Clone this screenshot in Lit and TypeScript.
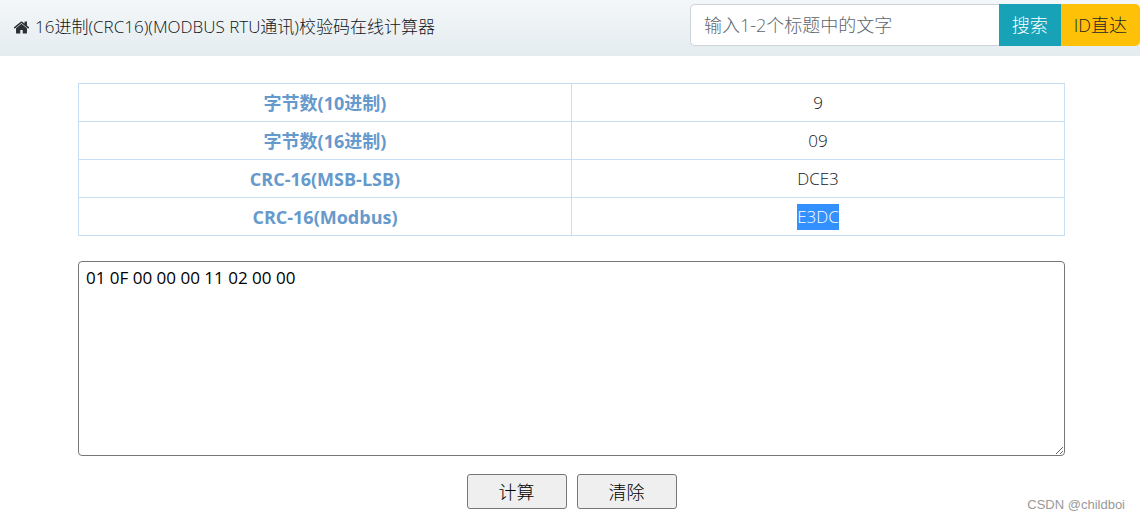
import { LitElement, html, css } from "lit";
import { customElement, state } from "lit/decorators.js";

const crc16 = (bytes: number[]): number => {
  let crc = 0xffff;
  for (const b of bytes) {
    crc ^= b;
    for (let i = 0; i < 8; i++) crc = crc & 1 ? (crc >> 1) ^ 0xa001 : crc >> 1;
  }
  return crc;
};

interface Result {
  label: string;
  value: string;
  selected?: boolean;
}

const initialResults: Result[] = [
  { label: "字节数(10进制)", value: "9" },
  { label: "字节数(16进制)", value: "09" },
  { label: "CRC-16(MSB-LSB)", value: "DCE3" },
  { label: "CRC-16(Modbus)", value: "E3DC", selected: true },
];

@customElement("app-root")
export class AppRoot extends LitElement {
  @state() private text = "01 0F 00 00 00 11 02 00 00";
  @state() private results = initialResults;

  static styles = css`
    :host {
      display: block;
      position: relative;
      min-height: 100vh;
      box-sizing: border-box;
      background: #fff;
      color: #111418;
      font: 300 17px/26px "Open Sans", "Noto Sans CJK SC", sans-serif;
    }
    * {
      box-sizing: border-box;
    }
    header {
      display: flex;
      justify-content: space-between;
      align-items: flex-start;
      height: 56px;
      padding-top: 4px;
      background: linear-gradient(#f4f7f9, #e4ecef);
    }
    .title {
      display: flex;
      align-items: center;
      gap: 5px;
      height: 46px;
      margin: 0;
      padding-left: 13px;
      font-size: 17px;
      font-weight: 300;
      white-space: nowrap;
    }
    .home {
      display: flex;
      color: #2b3035;
    }
    .search {
      display: flex;
      width: 450px;
      height: 42px;
      font-size: 18px;
    }
    input,
    button,
    textarea {
      font: inherit;
    }
    .query {
      flex: 1;
      min-width: 0;
      padding: 0 13px;
      border: 1px solid #ced4da;
      border-right: 0;
      border-radius: 5px 0 0 5px;
      background: #fff;
    }
    .query::placeholder {
      color: #5c656d;
      opacity: 1;
    }
    .search button {
      border: 0;
      padding: 0 13px;
      white-space: nowrap;
    }
    .find {
      background: #17a2b8;
      color: #fff;
    }
    .search .direct {
      border-radius: 0 5px 5px 0;
      background: #ffc107;
      color: #212529;
    }
    main {
      padding: 27px 75px 0 78px;
    }
    table {
      width: 100%;
      table-layout: fixed;
      border-collapse: collapse;
      text-align: center;
    }
    th,
    td {
      height: 38px;
      padding: 0;
      border: 1px solid #c6dff5;
    }
    th {
      color: #6699cc;
      font-size: 18px;
      font-weight: 700;
    }
    .selected {
      display: inline-block;
      background: #3390ff;
      color: #fff;
    }
    .bytes {
      display: block;
      width: 100%;
      height: 195px;
      margin-top: 25px;
      padding: 3px 7px;
      border: 1px solid #767676;
      border-radius: 4px;
      background: #fff;
      color: #000;
      font-weight: 400;
      resize: both;
    }
    .actions {
      display: flex;
      justify-content: center;
      gap: 10px;
      margin-top: 18px;
      font-size: 18px;
    }
    .actions button {
      width: 100px;
      height: 35px;
      padding: 0;
      border: 1px solid #767676;
      border-radius: 3px;
      background: #efefef;
      color: #000;
    }
    .mark {
      position: absolute;
      right: 15px;
      bottom: 5px;
      color: #999;
      font: 13px/20px "Liberation Sans", sans-serif;
    }
  `;

  private calculate() {
    const bytes = (this.text.match(/[0-9a-f]{1,2}/gi) ?? []).map((h) => parseInt(h, 16));
    const modbus = crc16(bytes);
    const hex = (n: number, width: number) => n.toString(16).toUpperCase().padStart(width, "0");
    const values = [
      String(bytes.length),
      hex(bytes.length, 2),
      hex(modbus, 4),
      hex(((modbus & 255) << 8) | (modbus >> 8), 4),
    ];
    this.results = initialResults.map((r, i) => ({ ...r, value: values[i] }));
  }

  private clear() {
    this.text = "";
  }

  render() {
    return html`
      <header>
        <h1 class="title">
          <a class="home" href="#" aria-label="首页">
            <svg width="17" height="17" viewBox="0 0 1664 1792" fill="currentColor" aria-hidden="true">
              <path
                d="M1408 992v480q0 26-19 45t-45 19H960v-384H704v384H320q-26 0-45-19t-19-45V992q0-1 .5-3t.5-3l575-474 575 474q1 2 1 6zm223-69-62 74q-8 9-21 11h-3q-13 0-21-7L832 424l-692 577q-12 8-24 7-13-2-21-11l-62-74q-8-10-7-23.500t11-21.500l719-599q32-26 76-26t76 26l244 204V288q0-14 9-23t23-9h192q14 0 23 9t9 23v408l219 182q10 8 11 21.500t-7 23.500z"
              />
            </svg>
          </a>
          <span>16进制(CRC16)(MODBUS RTU通讯)校验码在线计算器</span>
        </h1>
        <form class="search" @submit=${(e: Event) => e.preventDefault()}>
          <input class="query" type="text" aria-label="标题搜索" placeholder="输入1-2个标题中的文字" />
          <button class="find" type="submit">搜索</button>
          <button class="direct" type="button">ID直达</button>
        </form>
      </header>
      <main>
        <table>
          <tbody>
            ${this.results.map(
              (r) => html`<tr>
                <th scope="row">${r.label}</th>
                <td>${r.selected ? html`<span class="selected">${r.value}</span>` : r.value}</td>
              </tr>`
            )}
          </tbody>
        </table>
        <textarea
          class="bytes"
          aria-label="16进制数据"
          spellcheck="false"
          .value=${this.text}
          @input=${(e: Event) => (this.text = (e.target as HTMLTextAreaElement).value)}
        ></textarea>
        <div class="actions">
          <button type="button" @click=${this.calculate}>计算</button>
          <button type="button" @click=${this.clear}>清除</button>
        </div>
      </main>
      <div class="mark">CSDN @childboi</div>
    `;
  }
}
